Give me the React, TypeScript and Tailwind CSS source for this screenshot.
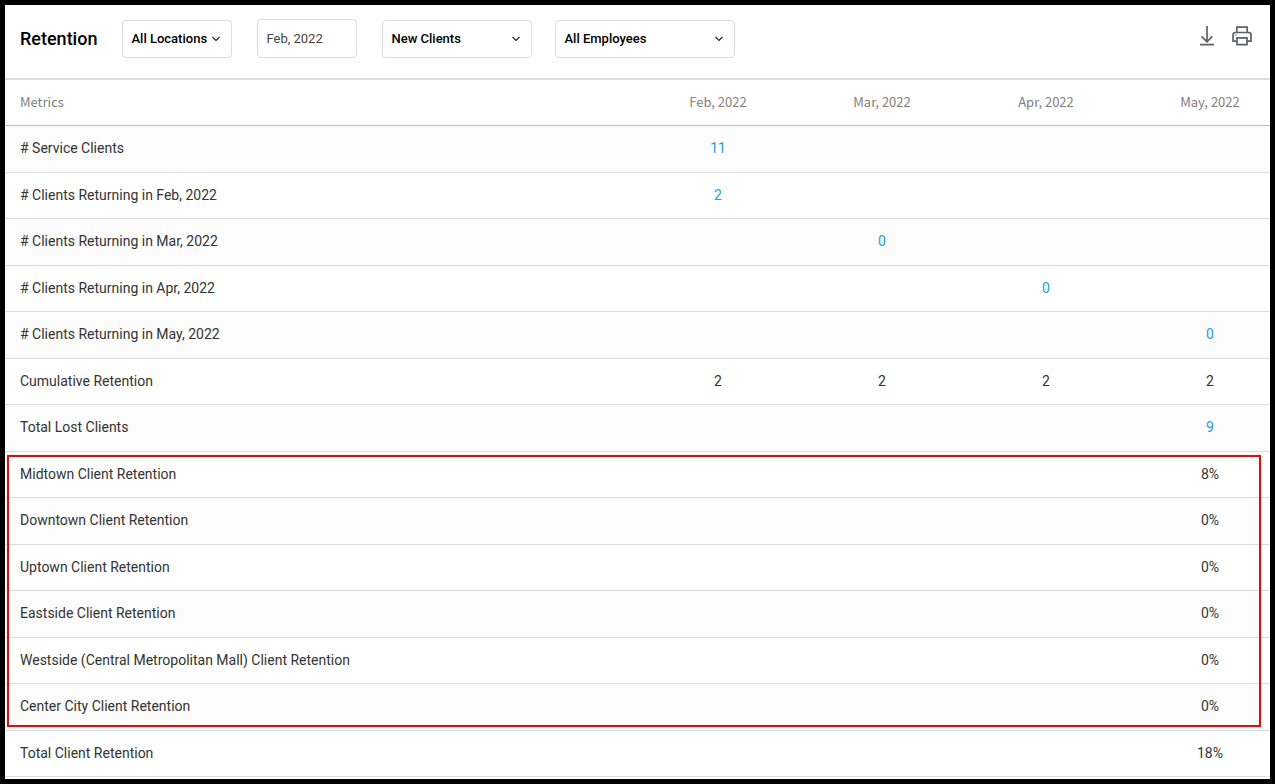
import React, { useState } from 'react';

interface MetricRow {
  label: string;
  values: [string, string, string, string];
  link?: boolean;
}

const MONTHS = ['Feb, 2022', 'Mar, 2022', 'Apr, 2022', 'May, 2022'];

const ROWS: MetricRow[] = [
  { label: '# Service Clients', values: ['11', '', '', ''], link: true },
  { label: '# Clients Returning in Feb, 2022', values: ['2', '', '', ''], link: true },
  { label: '# Clients Returning in Mar, 2022', values: ['', '0', '', ''], link: true },
  { label: '# Clients Returning in Apr, 2022', values: ['', '', '0', ''], link: true },
  { label: '# Clients Returning in May, 2022', values: ['', '', '', '0'], link: true },
  { label: 'Cumulative Retention', values: ['2', '2', '2', '2'] },
  { label: 'Total Lost Clients', values: ['', '', '', '9'], link: true },
  { label: 'Midtown Client Retention', values: ['', '', '', '8%'] },
  { label: 'Downtown Client Retention', values: ['', '', '', '0%'] },
  { label: 'Uptown Client Retention', values: ['', '', '', '0%'] },
  { label: 'Eastside Client Retention', values: ['', '', '', '0%'] },
  { label: 'Westside (Central Metropolitan Mall) Client Retention', values: ['', '', '', '0%'] },
  { label: 'Center City Client Retention', values: ['', '', '', '0%'] },
  { label: 'Total Client Retention', values: ['', '', '', '18%'] },
];

function FilterSelect({ label, options, className }: { label: string; options: string[]; className: string }) {
  return (
    <div className={`relative ${className}`}>
      <select
        aria-label={label}
        className="w-full h-[38px] appearance-none rounded border border-[#dcdcdc] bg-white pl-2 text-[13px] font-medium text-black"
      >
        {options.map(o => <option key={o}>{o}</option>)}
      </select>
      <svg className="pointer-events-none absolute right-[11px] top-4 w-[10px] h-[6px]" viewBox="0 0 10 6" fill="none" stroke="#222" strokeWidth="1.2">
        <path d="M1.5 1 5 4.4 8.5 1" />
      </svg>
    </div>
  );
}

function DownloadIcon() {
  return (
    <svg width="16" height="20" viewBox="0 0 16 20" fill="none" stroke="#5f6066" strokeWidth="1.7">
      <path d="M8 0v15.5M2.6 10.4 8 15.7l5.4-5.3M1 18.6h14" />
    </svg>
  );
}

function PrintIcon() {
  return (
    <svg width="20" height="20" viewBox="0 0 20 20" fill="none" stroke="#5f6066" strokeWidth="1.7">
      <path d="M4.8 6.5V1.2h10.4v5.3" />
      <path d="M5 15.2H1V8.9a2.4 2.4 0 0 1 2.4-2.4h13.2a2.4 2.4 0 0 1 2.4 2.4v6.3h-4" />
      <path d="M5 11.8h10v6.8H5z" />
      <path d="M3.2 9h1.4" strokeWidth="1.2" />
    </svg>
  );
}

export default function RetentionReport() {
  const [month, setMonth] = useState('Feb, 2022');

  return (
    <div className="min-h-screen border-5 border-black bg-white font-[Roboto,sans-serif] text-[#333]">
      <header className="flex items-center border-b-2 border-[#dcdcdc] pt-[14px] pb-5 pl-[15px] pr-[18px]">
        <h1 className="mr-[25px] text-lg leading-6 font-medium text-black">Retention</h1>
        <FilterSelect label="Location" options={['All Locations']} className="w-[110px] mr-[25px]" />
        <input
          aria-label="Month"
          value={month}
          onChange={e => setMonth(e.target.value)}
          className="w-[100px] h-[39px] mr-[25px] rounded border border-[#dcdcdc] px-2 text-[13px] text-[#444]"
        />
        <FilterSelect label="Client type" options={['New Clients']} className="w-[150px] mr-[23px]" />
        <FilterSelect label="Employee" options={['All Employees']} className="w-[180px]" />
        <div className="ml-auto flex gap-[17px] pb-[6px]">
          <button aria-label="Download"><DownloadIcon /></button>
          <button aria-label="Print"><PrintIcon /></button>
        </div>
      </header>

      <main className="relative">
        <table className="w-full table-fixed border-separate border-spacing-0 text-sm">
          <thead>
            <tr className="h-[46px] font-['Noto_Sans_CJK_SC',sans-serif] text-[13px] text-[#808080]">
              <th className="border-b border-[#bbb] pl-[15px] text-left font-normal">Metrics</th>
              {MONTHS.map(m => (
                <th key={m} className="w-[164px] border-b border-[#bbb] text-center font-normal last:w-[142px] last:pl-[22px]">{m}</th>
              ))}
            </tr>
          </thead>
          <tbody>
            {ROWS.map(row => (
              <tr key={row.label} className="h-[46px] odd:h-[47px] odd:bg-[#fcfcfc]">
                <td className="border-b border-[#dcdcdc] pb-[2px] pl-[15px]">{row.label}</td>
                {row.values.map((v, i) => (
                  <td key={MONTHS[i]} className="border-b border-[#dcdcdc] pb-[2px] text-center last:pl-[22px]">
                    {row.link && v ? <a href="#" className="text-[#1e9be9]">{v}</a> : v}
                  </td>
                ))}
              </tr>
            ))}
          </tbody>
        </table>
        {/* highlight around the per-location retention rows */}
        <div className="pointer-events-none absolute left-[2px] right-[9px] top-[375px] h-[272px] border-2 border-[#fe0000]" />
      </main>
    </div>
  );
}
